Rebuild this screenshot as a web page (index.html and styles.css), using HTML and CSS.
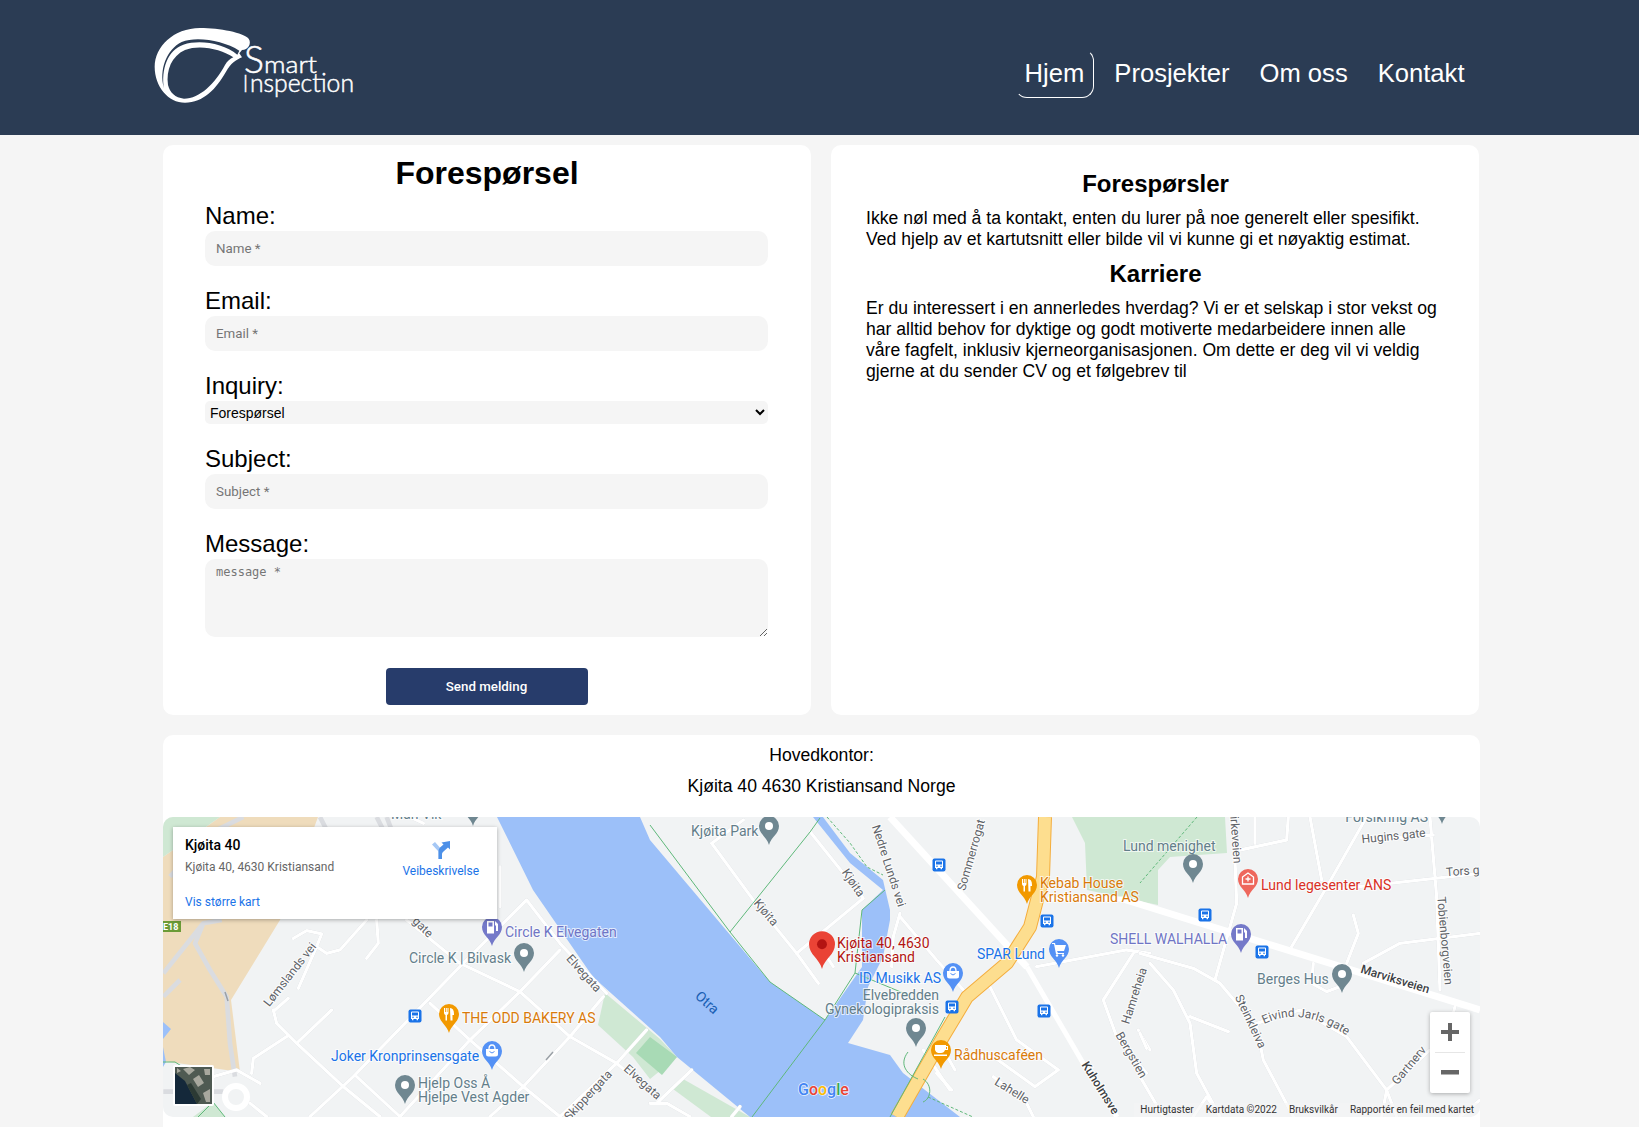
FILE: index.html
```html
<!DOCTYPE html>
<html lang="no">
<head>
<meta charset="utf-8">
<title>Smart Inspection</title>
<link rel="stylesheet" href="styles.css">
</head>
<body>
<header class="topbar">
  <a class="logo" href="#">
    <svg class="logo-svg" viewBox="150 20 210 85" width="210" height="85">
      <g transform="translate(150 20) scale(.3333)">
        <path class="logo-w" d="M296 56C280 38 210 24 150 24C70 25 14 80 14 140C14 200 55 248 105 248C160 248 200 205 228 155C242 130 258 120 276 112L268 100L276 90C294 90 306 70 296 56Z"/>
        <path class="logo-d" d="M42 205C26 150 50 88 95 66C140 48 220 62 268 92L262 104C220 70 150 58 100 74C52 90 33 150 42 205Z"/>
        <path class="logo-d" d="M250 112C215 88 150 72 105 90C65 108 48 150 54 195C60 218 75 233 102 236C150 236 195 190 225 135C232 124 240 116 250 112Z"/>
      </g>
      <text class="logo-t logo-s" x="244" y="73" textLength="20" lengthAdjust="spacingAndGlyphs">S</text>
      <text class="logo-t logo-m" x="264" y="73" textLength="53" lengthAdjust="spacingAndGlyphs">mart</text>
      <text class="logo-t logo-i" x="243" y="92" textLength="5" lengthAdjust="spacingAndGlyphs">I</text>
      <text class="logo-t logo-n" x="250" y="92" textLength="104" lengthAdjust="spacingAndGlyphs">nspection</text>
    </svg>
  </a>
  <nav class="nav">
    <a class="nav-link active" href="#">Hjem</a>
    <a class="nav-link" href="#">Prosjekter</a>
    <a class="nav-link" href="#">Om oss</a>
    <a class="nav-link" href="#">Kontakt</a>
  </nav>
</header>

<main class="page">
  <div class="columns">
    <section class="panel form-panel">
      <h1 class="form-title">Forespørsel</h1>
      <form class="form">
        <div class="field">
          <label class="label" for="f-name">Name:</label>
          <input class="control" id="f-name" type="text" placeholder="Name *">
        </div>
        <div class="field">
          <label class="label" for="f-email">Email:</label>
          <input class="control" id="f-email" type="text" placeholder="Email *">
        </div>
        <div class="field">
          <label class="label" for="f-inq">Inquiry:</label>
          <select class="select" id="f-inq"><option>Forespørsel</option></select>
        </div>
        <div class="field">
          <label class="label" for="f-sub">Subject:</label>
          <input class="control" id="f-sub" type="text" placeholder="Subject *">
        </div>
        <div class="field">
          <label class="label" for="f-msg">Message:</label>
          <textarea class="area" id="f-msg" placeholder="message *"></textarea>
        </div>
        <button class="send" type="button">Send melding</button>
      </form>
    </section>

    <section class="panel info-panel">
      <h2 class="info-title">Forespørsler</h2>
      <p class="info-text">Ikke nøl med å ta kontakt, enten du lurer på noe generelt eller spesifikt. Ved hjelp av et kartutsnitt eller bilde vil vi kunne gi et nøyaktig estimat.</p>
      <h2 class="info-title">Karriere</h2>
      <p class="info-text">Er du interessert i en annerledes hverdag? Vi er et selskap i stor vekst og har alltid behov for dyktige og godt motiverte medarbeidere innen alle våre fagfelt, inklusiv kjerneorganisasjonen. Om dette er deg vil vi veldig gjerne at du sender CV og et følgebrev til</p>
    </section>
  </div>

  <section class="panel office">
    <p class="office-line">Hovedkontor:</p>
    <p class="office-line">Kjøita 40 4630 Kristiansand Norge</p>
    <div class="map">
      <svg class="map-svg" viewBox="0 0 1317 300" width="1317" height="300">
        <defs>
          <path id="pin" d="M0 0C-2-8-10-11-10-19A10 10 0 1 1 10-19C10-11 2-8 0 0Z"/>
          <path id="eivind" d="M1101 207Q1140 188 1186 220"/>
          <g id="bus">
            <rect x="-6.500" y="-6.500" width="13" height="13" rx="2" class="bus-bg"/>
            <path class="glyph" d="M-4-3.500Q-4-4.500-3-4.500H3Q4-4.500 4-3.500V3H3V4.200H1.600V3H-1.600V4.200H-3V3H-4ZM-3-3.400V-.6H3V-3.400Z"/>
            <circle class="bus-w" cx="-2" cy="1.200" r=".8"/>
            <circle class="bus-w" cx="2" cy="1.200" r=".8"/>
          </g>
          <g id="g-dot"><circle cx="0" cy="-19" r="4" class="glyph"/></g>
          <g id="g-food"><path class="glyph" d="M-5-25H-4V-21H-3.200V-25H-2.200V-21H-1.500V-25H-.5V-20Q-.5-18.500-2-18V-12.500H-3.500V-18Q-5-18.500-5-20ZM1-25Q5-25 5-19V-18H3.500V-12.500H1.500Z"/></g>
          <g id="g-bag"><path class="glyph" d="M-6-21H6V-16Q6-13.500 3.500-13.500H-3.500Q-6-13.500-6-16Z"/><path class="gline" d="M-3-21Q-3-25 0-25Q3-25 3-21"/><path class="gdark" d="M-2.500-18.500Q0-15.500 2.500-18.500"/></g>
          <g id="g-fuel"><path class="glyph" d="M-5-25H2V-12.500H-5ZM3-25L6-22V-15H4V-20L3-21Z"/><rect class="gdark-f" x="-3.500" y="-23.500" width="4" height="4"/></g>
          <g id="g-cart"><path class="glyph" d="M-7-25H-4L-3.500-23H7L5-17H-2L-1-15H5V-14H-3L-5-24H-7Z"/><circle class="glyph" cx="-2" cy="-12.500" r="1.200"/><circle class="glyph" cx="4" cy="-12.500" r="1.200"/></g>
          <g id="g-cup"><path class="glyph" d="M-6-24H5V-23H7V-19H4Q3-16 0-16H-3Q-5-16-6-19ZM5-22V-20H6V-22ZM-7-14.500H6V-13H-7Z"/></g>
          <g id="g-med"><path class="gline" d="M-5.500-21L0-25L5.500-21V-14H-5.500Z"/><path class="gline" d="M-2.500-19H2.500M0-21.500V-16.500"/></g>
        </defs>

        <rect class="land" width="1317" height="300"/>
        <path class="beige" d="M57 0H155L117 103L68 183L77 255L0 244V40Z"/>
        <path class="park" d="M0 0H57L0 40Z"/>
        <path class="park" d="M909 0L922 26L924 73L995 88V53L1007 40L1064 36L1062 0Z"/>
        <path class="park" d="M442 176L497 222L514 240L487 262L470 240L435 208Z"/>
        <path class="park-d" d="M487 220L514 240L499 258L473 236Z"/>
        <path class="park" d="M520 262L587 300H548L510 272Z"/>
        <path class="park" d="M30 300L50 285L62 300Z"/>
        <path class="water" d="M0 205L8 212L0 222ZM0 230L3 245L0 250Z"/>
        <path class="water" d="M334 0L370 73L430 160L497 220L514 240L587 300H797L740 256L727 238L685 226L700 203L705 170L720 140L727 103V93L720 63L687 36L660 0H650L687 46L720 73L699 93V150L662 203L607 165L487 23L477 0Z"/>

        <g class="r-gray" transform="translate(-3 -7) scale(.3333)">
          <path d="M10 490L130 340L185 330M130 340L105 400L150 480L200 560L210 700L225 800M10 560L60 510M10 845H190"/>
          <path d="M480 21L500 60M650 21L670 60M680 21L695 60M250 21L150 70L30 200"/>
        </g>

        <g class="r-white" transform="translate(-3 -7) scale(.3333)">
          <path d="M450 920L580 800L880 490L1100 270L1200 400L1340 550"/>
          <path d="M720 920L930 690L1080 545L1200 420"/>
          <path d="M990 920L1090 830L1230 680L1330 560"/>
          <path d="M1200 920L1370 760L1460 660"/>
          <path d="M810 580L930 690L1090 830L1200 920"/>
          <path d="M740 330L900 460L1080 545L1230 680L1370 760L1500 870"/>
          <path d="M340 600L350 640L410 700L550 830L660 920M590 800L720 920"/>
          <path d="M515 600L415 695M380 680L280 745L275 790"/>
          <path d="M400 385L440 362L485 372L470 410L500 430L540 420L620 330M470 410L415 535M650 330L655 400L620 445M345 600L385 565"/>
          <path d="M1020 170V290M750 21L790 40"/>
          <path d="M160 800L230 780L300 820M270 880L320 920"/>
        </g>
        <g class="r-white" transform="translate(487 -7) scale(.3333)">
          <path d="M185 100L310 270L440 430L505 520M185 100L280 30"/>
          <path d="M480 65L640 265L440 430M530 440L550 470"/>
          <path d="M750 310L730 380L725 470M750 320L860 450L940 540"/>
          <path d="M1020 530L1100 690L1225 780L1155 830L1030 740L940 740M820 720L900 840M870 700L915 780"/>
          <path d="M1030 800L1130 880L1150 920M860 790L905 840"/>
          <path d="M1160 470L1430 420L1500 430M1450 430L1360 570L1400 680L1490 790M1465 660L1500 720"/>
          <path d="M125 780L20 880M0 880H50L120 920M270 890L245 920"/>
        </g>
        <g class="r-white" transform="translate(977 -7) scale(.3333)">
          <path d="M280 21L290 280L225 510M300 120L440 90L445 21M345 21V100"/>
          <path d="M510 21L545 210M680 21L555 240L455 410M670 90L880 75M555 240L750 220L1020 190M870 21L890 260L900 540"/>
          <path d="M640 315L655 370L620 460M520 460L515 520L560 545L600 530M670 460L780 400L1020 370"/>
          <path d="M0 430L160 475L240 520L350 650L370 750L460 920M30 460L100 540L150 640L170 790L240 920M150 620L265 665M0 670L20 715M0 800L70 920M200 860L160 920M200 860L240 920"/>
          <path d="M350 640L480 600L620 680L740 840L770 920M740 840L725 920M740 840L870 720M945 590L940 610M1020 870L960 920"/>
        </g>
        <g class="r-wide">
          <path d="M727 0L864 150"/>
          <path class="thinner" d="M864 150L920 246L954 300"/>
          <path d="M960 82L1317 193"/>
          <path class="thinner" d="M885 82L960 82"/>
        </g>
        <g class="r-yellow-c"><path d="M882 0L880 60L867 110L844 146L804 180L780 220L734 300"/></g>
        <g class="r-yellow"><path d="M882 0L880 60L867 110L844 146L804 180L780 220L734 300"/></g>
        <g class="r-bike">
          <path d="M487 8L567 115L607 165L662 203M567 115L647 15L657 1M662 203L589 300M662 203L692 156L699 93L722 73M692 156L745 178M782 200L727 300"/>
          <path d="M745 235C735 248 745 258 755 262M760 262C770 268 768 282 760 285"/>
          <path d="M0 245H12L28 255M35 300L50 285L62 300"/>
          <path class="dash" d="M664 0L687 26L704 50L720 58M765 280L810 300M1034 0L977 66"/>
        </g>
        <path class="r-arrow" d="M62 175L65 184M383 243L390 235"/>

        <g class="st">
          <text transform="translate(130 160) rotate(-52)" text-anchor="middle">Lømslands vei</text>
          <text transform="translate(418 159) rotate(48)" text-anchor="middle">Elvegata</text>
          <text transform="translate(477 268) rotate(42)" text-anchor="middle">Elvegata</text>
          <text transform="translate(428 281) rotate(-47)" text-anchor="middle">Skippergata</text>
          <text transform="translate(257 113) rotate(45)" text-anchor="middle">gate</text>
          <text transform="translate(600 98) rotate(50)" text-anchor="middle">Kjøita</text>
          <text transform="translate(687 68) rotate(56)" text-anchor="middle">Kjøita</text>
          <text transform="translate(722 50) rotate(72)" text-anchor="middle">Nedre Lunds vei</text>
          <text transform="translate(812 39) rotate(-74)" text-anchor="middle">Sommerrogat</text>
          <text transform="translate(847 277) rotate(32)" text-anchor="middle">Lahelle</text>
          <text transform="translate(975 180) rotate(-72)" text-anchor="middle">Hamreheia</text>
          <text transform="translate(965 240) rotate(60)" text-anchor="middle">Bergstien</text>
          <text class="st-d" transform="translate(934 273) rotate(58)" text-anchor="middle">Kuholmsve</text>
          <text class="st-d" transform="translate(1231 166) rotate(17)" text-anchor="middle">Marviksveien</text>
          <text transform="translate(1231 23) rotate(-6)" text-anchor="middle">Hugins gate</text>
          <text transform="translate(1300 58) rotate(-4)" text-anchor="middle">Tors g</text>
          <text transform="translate(1278 124) rotate(85)" text-anchor="middle">Tobienborgveien</text>
          <text transform="translate(1084 206) rotate(65)" text-anchor="middle">Steinkleiva</text>
          <text><textPath href="#eivind">Eivind Jarls gate</textPath></text>
          <text transform="translate(1249 251) rotate(-50)" text-anchor="middle">Gartnerv</text>
          <text transform="translate(1069 23) rotate(86)" text-anchor="middle">irkeveien</text>
        </g>
        <text class="river" transform="translate(541 189) rotate(42)" text-anchor="middle">Otra</text>

        <rect class="e18" x="0" y="104" width="18" height="11"/>
        <text class="e18-t" x="0" y="113">E18</text>

        <use href="#bus" x="252" y="199"/>
        <use href="#bus" x="776" y="48"/>
        <use href="#bus" x="884" y="104"/>
        <use href="#bus" x="789" y="190"/>
        <use href="#bus" x="881" y="194"/>
        <use href="#bus" x="1042" y="98"/>
        <use href="#bus" x="1099" y="135"/>

        <g class="lbl l-gray">
          <text x="228" y="2">Mån Vik</text>
          <text x="528" y="19">Kjøita Park</text>
          <text x="246" y="146">Circle K | Bilvask</text>
          <text x="255" y="271">Hjelp Oss Å</text>
          <text x="255" y="285">Hjelpe Vest Agder</text>
          <text x="776" y="183" text-anchor="end">Elvebredden</text>
          <text x="776" y="197" text-anchor="end">Gynekologipraksis</text>
          <text x="960" y="34">Lund menighet</text>
          <text x="1094" y="167">Berges Hus</text>
          <text x="1265" y="5" text-anchor="end">Forsikring AS</text>
        </g>
        <g class="lbl l-purple">
          <text x="342" y="120">Circle K Elvegaten</text>
          <text x="947" y="127">SHELL WALHALLA</text>
        </g>
        <g class="lbl l-orange">
          <text x="299" y="206">THE ODD BAKERY AS</text>
          <text x="791" y="243">Rådhuscaféen</text>
          <text x="877" y="71">Kebab House</text>
          <text x="877" y="85">Kristiansand AS</text>
        </g>
        <g class="lbl l-blue">
          <text x="168" y="244">Joker Kronprinsensgate</text>
          <text x="696" y="166">ID Musikk AS</text>
          <text x="814" y="142">SPAR Lund</text>
        </g>
        <g class="lbl l-red">
          <text x="1098" y="73">Lund legesenter ANS</text>
        </g>
        <g class="lbl l-dred">
          <text x="674" y="131">Kjøita 40, 4630</text>
          <text x="674" y="145">Kristiansand</text>
        </g>

        <g class="p-gray">
          <g transform="translate(310 9)"><use href="#pin"/><use href="#g-dot"/></g>
          <g transform="translate(606 28)"><use href="#pin"/><use href="#g-dot"/></g>
          <g transform="translate(361 155)"><use href="#pin"/><use href="#g-dot"/></g>
          <g transform="translate(242 287)"><use href="#pin"/><use href="#g-dot"/></g>
          <g transform="translate(753 230)"><use href="#pin"/><use href="#g-dot"/></g>
          <g transform="translate(1030 66)"><use href="#pin"/><use href="#g-dot"/></g>
          <g transform="translate(1179 176)"><use href="#pin"/><use href="#g-dot"/></g>
          <g transform="translate(1279 7)"><use href="#pin"/><use href="#g-dot"/></g>
        </g>
        <g class="p-purple">
          <g transform="translate(329 129)"><use href="#pin"/><use href="#g-fuel"/></g>
          <g transform="translate(1078 136)"><use href="#pin"/><use href="#g-fuel"/></g>
        </g>
        <g class="p-orange">
          <g transform="translate(286 216)"><use href="#pin"/><use href="#g-food"/></g>
          <g transform="translate(864 87)"><use href="#pin"/><use href="#g-food"/></g>
          <g transform="translate(778 252)"><use href="#pin"/><use href="#g-cup"/></g>
        </g>
        <g class="p-blue">
          <g transform="translate(329 253)"><use href="#pin"/><use href="#g-bag"/></g>
          <g transform="translate(790 175)"><use href="#pin"/><use href="#g-bag"/></g>
          <g transform="translate(896 151)"><use href="#pin"/><use href="#g-cart"/></g>
        </g>
        <g class="p-red"><g transform="translate(1085 81)"><use href="#pin"/><use href="#g-med"/></g></g>

        <g transform="translate(659 152) scale(1.3)">
          <use href="#pin" class="marker"/>
          <circle cx="0" cy="-19" r="3.800" class="marker-dot"/>
        </g>

        <text class="g-logo" x="635" y="278"><tspan class="g-b">G</tspan><tspan class="g-r">o</tspan><tspan class="g-y">o</tspan><tspan class="g-b">g</tspan><tspan class="g-gr">l</tspan><tspan class="g-r">e</tspan></text>

        <circle class="round-o" cx="73" cy="280" r="11"/>
        <circle class="round-i" cx="73" cy="280" r="7"/>
        <g class="thumb">
          <rect class="thumb-b" x="10" y="248" width="41" height="41" rx="2"/>
          <rect class="thumb-l" x="12" y="250" width="37" height="37"/>
          <path class="thumb-w" d="M12 256L22 264L34 287H12Z"/>
          <path class="thumb-g" d="M20 252L26 258L32 253L27 250ZM30 262L36 258L41 266L35 270ZM40 276L47 272V285H43ZM41 252H47V258H42ZM14 251L18 254L14 256Z"/>
          <path class="thumb-d" d="M28 266L38 282L34 287L24 268Z"/>
        </g>
      </svg>

      <div class="place-card">
        <div class="place-main">
          <div class="place-name">Kjøita 40</div>
          <div class="place-addr">Kjøita 40, 4630 Kristiansand</div>
          <a class="place-link place-more" href="#">Vis større kart</a>
        </div>
        <a class="place-dir" href="#">
          <svg class="dir-icon" viewBox="0 0 18 18" width="18" height="18">
            <path class="dir-l" d="M0 3.500L3 1L10 9V18H6.500V10.500Z"/>
            <path class="dir-r" d="M6.500 18V10Q6.500 8 8 6.500L11.500 3.500L9.500 1.500L18 0V8.500L16 6.500L11.500 10.500Q10 11.500 10 13V18Z"/>
          </svg>
          <span>Veibeskrivelse</span>
        </a>
      </div>

      <div class="zoom-box">
        <svg class="zoom-icon" viewBox="0 0 40 40" width="40" height="40"><path d="M11 18H18V11H22V18H29V22H22V29H18V22H11Z"/></svg>
        <div class="zoom-sep"></div>
        <svg class="zoom-icon" viewBox="0 0 40 40" width="40" height="40"><path d="M11 17H29V21.500H11Z"/></svg>
      </div>

      <div class="attrib">
        <span>Hurtigtaster</span>
        <span>Kartdata ©2022</span>
        <span>Bruksvilkår</span>
        <span>Rapportér en feil med kartet</span>
      </div>
    </div>
  </section>
</main>
</body>
</html>
```

FILE: styles.css
```css
* { box-sizing: border-box; }
html, body { margin: 0; padding: 0; }
body {
  background: #f5f5f5;
  font-family: "Liberation Sans", Arial, sans-serif;
  color: #000;
  height: 1127px;
  overflow: hidden;
}

/* header */
.topbar {
  height: 135px;
  background: #2b3c54;
  display: flex;
  align-items: flex-start;
  justify-content: space-between;
  padding: 0 164.500px 0 150px;
}
.logo { display: block; margin-top: 20px; }
.logo-svg { display: block; }
.logo-w { fill: #fff; }
.logo-d { fill: #2b3c54; }
.logo-t {
  font-family: Lato, sans-serif;
  font-weight: 300;
  fill: #fff;
  stroke: #fff;
  stroke-width: .5;
}
.logo-s { font-size: 37px; }
.logo-m { font-size: 24px; }
.logo-i { font-size: 23px; }
.logo-n { font-size: 26px; }

.nav { display: flex; gap: 10px; margin-top: 49px; }
.nav-link {
  display: block;
  height: 49px;
  padding: 0 9px;
  line-height: 46px;
  font-size: 25.6px;
  color: #fff;
  text-decoration: none;
  border: 1px solid transparent;
  border-radius: 12px;
}
.nav-link.active { border-right-color: #fff; border-bottom-color: #fff; }

/* layout */
.page { width: 1317px; margin: 10px 0 0 163px; display: flex; flex-direction: column; gap: 20px; }
.columns { display: grid; grid-template-columns: 648px 648px; gap: 20px; }
.panel { background: #fff; border-radius: 10px; }

/* form */
.form-panel { height: 570px; padding: 10px 43px 0 42px; }
.form-title { margin: 0; padding-left: 1px; font-size: 32px; line-height: 37px; text-align: center; font-weight: 700; }
.form { display: flex; flex-direction: column; }
.field { display: flex; flex-direction: column; }
.label { display: block; font-size: 24px; line-height: 26px; margin: 22px 0 2px; }
.field:first-child .label { margin-top: 11px; }
.control, .select, .area {
  display: block;
  width: 100%;
  background: #f5f5f5;
  border: none;
  border-radius: 10px;
  outline: none;
}
.control {
  height: 35px;
  padding: 0 11px;
  font-family: Roboto, sans-serif;
  font-size: 13.333px;
  color: #000;
}
.control::placeholder { color: #757575; }
.select {
  height: 23px;
  border-radius: 5px;
  padding: 0 0 0 1px;
  font-family: "Liberation Sans", Arial, sans-serif;
  font-size: 14px;
  color: #000;
}
.area {
  height: 78px;
  padding: 6px 11px;
  font-family: "DejaVu Sans Mono", monospace;
  font-size: 12px;
  resize: vertical;
}
.area::placeholder { color: #757575; }
.send {
  align-self: center;
  width: 202px;
  height: 37px;
  margin-top: 31px;
  background: #273c6b;
  color: #fff;
  border: none;
  border-radius: 4px;
  font-family: Roboto, sans-serif;
  font-size: 13.333px;
  font-weight: 500;
}

/* info */
.info-panel { height: 570px; padding: 25px 35px 0; }
.info-title { margin: 0; padding-left: 1px; font-size: 24px; line-height: 28px; text-align: center; font-weight: 700; }
.info-text { margin: 10px 0; font-size: 17.6px; line-height: 21px; }

/* office */
.office { height: 392px; border-radius: 10px 10px 0 0; padding-top: 10px; }
.office-line { margin: 0 0 10px; height: 21px; line-height: 21px; font-size: 17.6px; text-align: center; }
.map { position: relative; height: 300px; margin-top: 20px; border-radius: 10px; overflow: hidden; }
.map-svg { display: block; }

.land { fill: #f1f3f4; }
.beige { fill: #efdcbc; }
.park { fill: #cfe8d3; }
.park-d { fill: #a8dab5; }
.water { fill: #9cc0f9; }
.r-gray path { fill: none; stroke: #dadce0; stroke-width: 14; stroke-linejoin: round; }
.r-white { filter: drop-shadow(0 0 .5px #c9ccd1); }
.r-white path { fill: none; stroke: #fff; stroke-width: 10; stroke-linecap: round; stroke-linejoin: round; }
.r-wide path { fill: none; stroke: #fff; stroke-width: 7; }
.r-wide path.thinner { stroke-width: 5; }
.r-yellow-c path { fill: none; stroke: #f4ad3d; stroke-width: 14; stroke-linejoin: round; }
.r-yellow path { fill: none; stroke: #fdde8f; stroke-width: 12; stroke-linejoin: round; }
.r-bike path { fill: none; stroke: #5fb87a; stroke-width: 1; }
.r-bike path.dash { stroke-dasharray: 3 2; }
.r-arrow { fill: none; stroke: #9aa0a6; stroke-width: 1.500; }

.st text, .river, .lbl text, .g-logo, .e18-t {
  font-family: Roboto, sans-serif;
}
.st text {
  font-size: 12px;
  fill: #5f6368;
  paint-order: stroke;
  stroke: #fff;
  stroke-width: 2;
  stroke-opacity: .8;
}
.st text.st-d { fill: #3c4043; font-weight: 500; }
.river { font-size: 14px; fill: #1a5fb4; }
.e18 { fill: #6b9b37; }
.e18-t { font-size: 9px; fill: #fff; font-weight: 700; }
.lbl text {
  font-size: 14px;
  paint-order: stroke;
  stroke: #fff;
  stroke-width: 2;
  stroke-opacity: .7;
}
.l-gray text { fill: #637e8a; }
.l-purple text { fill: #6f75c5; }
.l-orange text { fill: #d97a0a; }
.l-blue text { fill: #1a73e8; }
.l-red text { fill: #d93025; }
.l-dred text { fill: #b31412; }

.p-gray use[href="#pin"] { fill: #6f8791; }
.p-purple use[href="#pin"] { fill: #7479c9; }
.p-orange use[href="#pin"] { fill: #f29900; }
.p-blue use[href="#pin"] { fill: #5491f5; }
.p-red use[href="#pin"] { fill: #ee675c; }
.glyph { fill: #fff; }
.gline { fill: none; stroke: #fff; stroke-width: 1.300; }
.gdark { fill: none; stroke: #5491f5; stroke-width: 1; }
.gdark-f { fill: #7479c9; }
.bus-bg { fill: #1a73e8; }
.bus-w { fill: #1a73e8; }
.marker { fill: #ea4335; }
.marker-dot { fill: #b31412; }

.g-logo { font-size: 16px; font-weight: 500; paint-order: stroke; stroke: #fff; stroke-width: 1.500; stroke-opacity: .8; }
.g-b { fill: #4285f4; }
.g-r { fill: #ea4335; }
.g-y { fill: #fbbc04; }
.g-gr { fill: #34a853; }

.thumb-b { fill: #fff; }
.thumb-l { fill: #4f5a52; }
.thumb-w { fill: #14283a; }
.thumb-g { fill: #a8a89e; }
.thumb-d { fill: #2c3a34; }
.round-o { fill: none; stroke: #fff; stroke-width: 6; }
.round-i { fill: #f1f3f4; }

.place-card {
  position: absolute;
  left: 10px;
  top: 10px;
  width: 324px;
  height: 92px;
  background: #fff;
  box-shadow: 0 1px 4px rgba(0, 0, 0, .3);
  display: flex;
  justify-content: space-between;
  padding: 10px 18px 0 12px;
  font-family: Roboto, sans-serif;
}
.place-name { font-size: 14px; font-weight: 500; line-height: 16px; color: #000; }
.place-addr { font-size: 12px; line-height: 14px; margin-top: 7px; color: #666; }
.place-link, .place-dir { color: #1a73e8; text-decoration: none; font-size: 12px; }
.place-more { display: block; margin-top: 21px; line-height: 14px; }
.place-dir { display: flex; flex-direction: column; align-items: center; gap: 5px; line-height: 14px; padding-top: 4px; }
.dir-icon { display: block; }
.dir-l { fill: #a6c8f5; }
.dir-r { fill: #4d90e8; }

.zoom-box {
  position: absolute;
  left: 1267px;
  top: 195px;
  width: 40px;
  height: 81px;
  background: #fff;
  border-radius: 2px;
  box-shadow: 0 1px 4px rgba(0, 0, 0, .3);
  display: flex;
  flex-direction: column;
}
.zoom-icon { display: block; }
.zoom-icon path { fill: #666; }
.zoom-sep { height: 1px; margin: 0 5px; background: #e6e6e6; }

.attrib {
  position: absolute;
  right: 0;
  bottom: 0;
  height: 14px;
  padding: 0 6px;
  display: flex;
  gap: 12px;
  font-family: Roboto, sans-serif;
  font-size: 10px;
  line-height: 14px;
  color: #333;
  background: rgba(245, 245, 245, .6);
}
```
